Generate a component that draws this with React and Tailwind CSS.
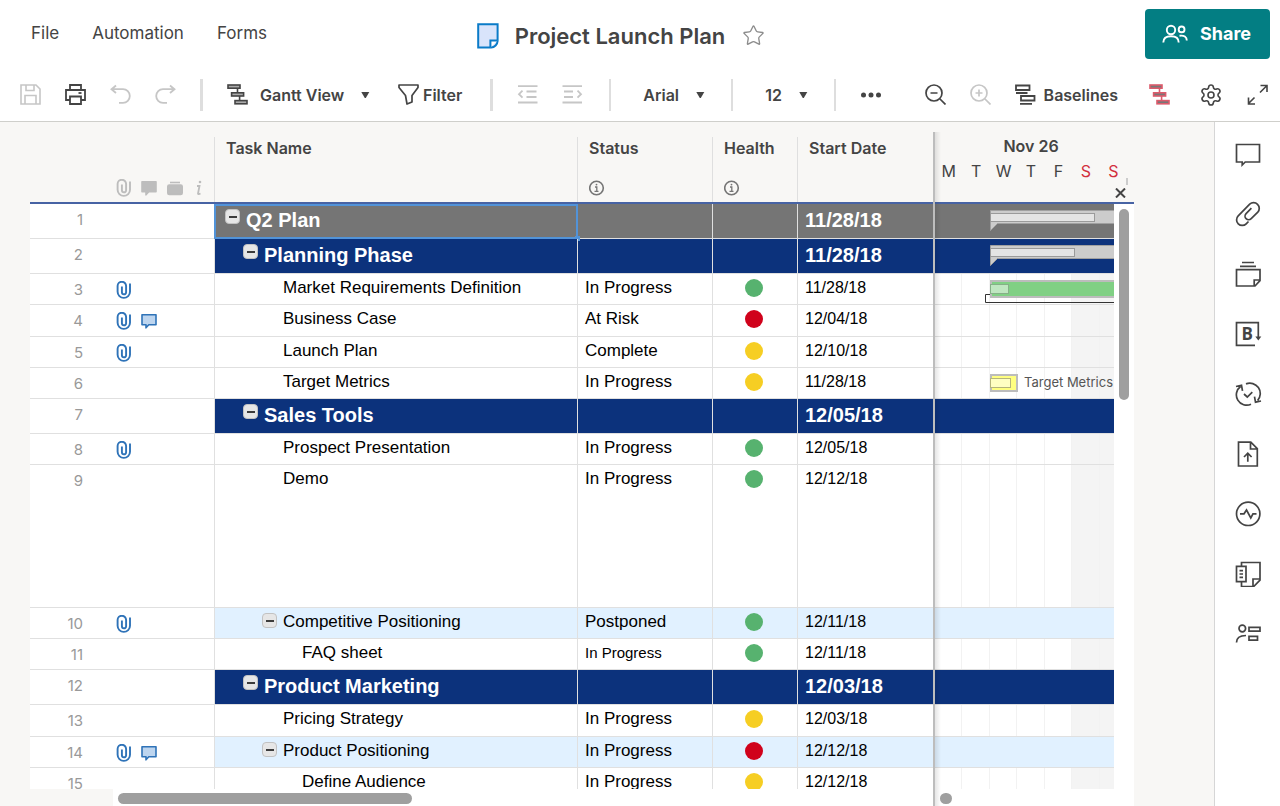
import { useState } from "react";
import { Settings, Star } from "lucide-react";

// Constants
const rows = [
  { id: 1, level: 0, type: "root", size: "lg", name: "Q2 Plan", date: "11/28/18", toggle: true, bar: "summary", progress: 105 },
  { id: 2, level: 1, type: "phase", size: "lg", name: "Planning Phase", date: "11/28/18", toggle: true, bar: "summary", progress: 85 },
  { id: 3, level: 2, size: "sm", name: "Market Requirements Definition", status: "In Progress", health: "green", date: "11/28/18", clip: true, bar: "green" },
  { id: 4, level: 2, size: "md", name: "Business Case", status: "At Risk", health: "red", date: "12/04/18", clip: true, comment: true },
  { id: 5, level: 2, size: "sm", name: "Launch Plan", status: "Complete", health: "yellow", date: "12/10/18", clip: true },
  { id: 6, level: 2, size: "sm", name: "Target Metrics", status: "In Progress", health: "yellow", date: "11/28/18", bar: "yellow" },
  { id: 7, level: 1, type: "phase", size: "lg", name: "Sales Tools", date: "12/05/18", toggle: true },
  { id: 8, level: 2, size: "sm", name: "Prospect Presentation", status: "In Progress", health: "green", date: "12/05/18", clip: true },
  { id: 9, level: 2, size: "xl", name: "Demo", status: "In Progress", health: "green", date: "12/12/18" },
  { id: 10, level: 2, type: "group", size: "sm", name: "Competitive Positioning", status: "Postponed", health: "green", date: "12/11/18", toggle: true, clip: true },
  { id: 11, level: 3, size: "sm", name: "FAQ sheet", status: "In Progress", smallStatus: true, health: "green", date: "12/11/18" },
  { id: 12, level: 1, type: "phase", size: "lg", name: "Product Marketing", date: "12/03/18", toggle: true },
  { id: 13, level: 2, size: "md", name: "Pricing Strategy", status: "In Progress", health: "yellow", date: "12/03/18" },
  { id: 14, level: 2, type: "group", size: "sm", name: "Product Positioning", status: "In Progress", health: "red", date: "12/12/18", toggle: true, clip: true, comment: true },
  { id: 15, level: 3, size: "sm", name: "Define Audience", status: "In Progress", health: "yellow", date: "12/12/18" },
];

const rowHeights = {
  sm: "h-[31px]",
  md: "h-[32px]",
  lg: "h-[35px]",
  xl: "h-[143px]",
};

const rowColors = {
  root: "bg-[#757575] text-white",
  phase: "bg-[#0c327c] text-white",
  group: "bg-[#e1f1ff] text-black",
  task: "bg-white text-black",
};

const indents = ["pl-[10px]", "pl-[28px]", "pl-[47px]", "pl-[66px]"];

const healthColors = {
  green: "bg-[#57b26f]",
  red: "bg-[#d0021b]",
  yellow: "bg-[#f6ce23]",
};

const days = ["M", "T", "W", "T", "F", "S", "S"];

const Icon = ({ w, h, sw = 1.6, className = "", children }) => (
  <svg
    width={w}
    height={h}
    viewBox={`0 0 ${w} ${h}`}
    fill="none"
    stroke="currentColor"
    strokeWidth={sw}
    className={`shrink-0 ${className}`}
    aria-hidden="true"
  >
    {children}
  </svg>
);

const ClipIcon = () => (
  <Icon w={15} h={18} sw={1.9}>
    <path d="M14 2.5v8.2a6.2 6.2 0 0 1-12.4 0V5a4.2 4.2 0 0 1 8.5 0v6.3a2.1 2.1 0 0 1-4.2 0V5.5" />
  </Icon>
);

const CommentIcon = ({ fill }) => (
  <Icon w={16} h={16} sw={1.6}>
    <path d="M1 1.8h14v10H7.8l-2.8 3v-3H1z" fill={fill} strokeLinejoin="round" />
  </Icon>
);

const InfoIcon = () => (
  <Icon w={16} h={16} className="text-[#757575]">
    <circle cx="7.500" cy="8" r="6.800" />
    <path d="M6 7h1.8v4.2M5.500 11.400h4" strokeWidth="1.3" />
    <circle cx="7.500" cy="4.600" r="0.900" fill="currentColor" stroke="none" />
  </Icon>
);

const Caret = () => (
  <svg width="9" height="6" viewBox="0 0 9 6" className="shrink-0 pointer-events-none" aria-hidden="true">
    <path d="M.3 0h8L4.8 6H3.8z" fill="#444" />
  </svg>
);

const ToolButton = ({ label, className = "", children }) => (
  <button aria-label={label} className={`flex items-center shrink-0 ${className}`}>
    {children}
  </button>
);

const ToolSelect = ({ label, options, className }) => (
  <label className="flex items-center shrink-0">
    <select
      aria-label={label}
      className={`appearance-none bg-transparent p-0 text-base font-semibold focus:outline-none ${className}`}
    >
      {options.map((option) => (
        <option key={option}>{option}</option>
      ))}
    </select>
    <Caret />
  </label>
);

const Separator = ({ className }) => (
  <div className={`h-8 shrink-0 bg-[#dedede] ${className}`}></div>
);

const GanttIcon = ({ className = "", fill }) => (
  <Icon w={21} h={21} className={className}>
    <rect x="1" y="1" width="12" height="3.2" fill={fill} />
    <rect x="4.6" y="8.8" width="12" height="3.2" fill={fill} />
    <rect x="8" y="16.6" width="12" height="3.2" fill={fill} />
    <path d="M10.5 4.2v4.6M12.6 12v4.6" />
  </Icon>
);

const TopBar = () => (
  <div className="flex items-center h-[68px]">
    <nav className="flex flex-1 gap-[33px] pl-[31px] text-[17px]">
      <a href="#file">File</a>
      <a href="#automation">Automation</a>
      <a href="#forms">Forms</a>
    </nav>
    <div className="flex items-center mr-[59px] pt-[3px]">
      <Icon w={22} h={26} sw={2}>
        <path d="M1.2 1.2h19.4V18a7 7 0 0 1-6.500 6.600H1.200z" fill="#d9e4fb" stroke="#0a7bc8" />
        <path d="M20.600 17.400h-7.200v7.200" fill="#fff" stroke="#0a7bc8" />
      </Icon>
      <h1 className="ml-4 text-[22px] leading-7 font-semibold">Project Launch Plan</h1>
      <button aria-label="Add to favorites" className="ml-[17px] text-[#8c8c8c]">
        <Star size={23} strokeWidth={1.4} />
      </button>
    </div>
    <div className="flex flex-1 justify-end pr-2.5">
      <button className="flex items-center gap-3 h-[50px] w-[125px] pl-[17px] rounded bg-[#037e83] text-white text-lg font-bold">
        <Icon w={26} h={20} sw={1.9}>
          <circle cx="9" cy="6" r="4.2" />
          <circle cx="19.6" cy="5.4" r="2.9" />
          <path d="M1.3 18.600c0-4 3-6.400 7.700-6.400s7.700 2.400 7.700 6.400M17.500 11.800c4.600-.6 7.300 1 7.300 4.600" />
        </Icon>
        Share
      </button>
    </div>
  </div>
);

const Toolbar = () => (
  <div className="flex items-center h-[53px] pl-5 pr-3">
    <div className="flex items-center gap-6">
      <ToolButton label="Save" className="text-[#c6c6c6]">
        <Icon w={21} h={21}>
          <path d="M1 1h15l4 4v15H1zM6 1v5.500h8V1M5 20v-8.500h11V20" />
        </Icon>
      </ToolButton>
      <ToolButton label="Print">
        <Icon w={21} h={21} sw={1.8}>
          <path d="M5 6V1h11v5M5 16H1V6h19v10h-4" />
          <path d="M5 12.500h11V20H5z" />
          <path d="M13.500 9h3" />
        </Icon>
      </ToolButton>
      <ToolButton label="Undo" className="text-[#c6c6c6]">
        <Icon w={21} h={21} sw={1.8}>
          <path d="M6 1.500L1.500 5.200 6 9M1.500 5.200H13a6.800 6.800 0 0 1 0 13.600H9" />
        </Icon>
      </ToolButton>
      <ToolButton label="Redo" className="text-[#c6c6c6]">
        <Icon w={21} h={21} sw={1.8}>
          <path d="M15 1.500l4.500 3.700L15 9M19.500 5.200H8a6.800 6.800 0 0 0 0 13.600h4" />
        </Icon>
      </ToolButton>
    </div>
    <Separator className="mx-6 w-[3px]" />
    <GanttIcon fill="#aaaaaa" className="mr-3" />
    <ToolSelect label="View" options={["Gantt View", "Grid View", "Card View"]} className="w-[101px]" />
    <ToolButton label="Filter" className="ml-7 gap-1 font-semibold">
      <Icon w={21} h={21} sw={1.7}>
        <path d="M1 1h19v2.500l-6 8V18l-5 2-1.500-8.500L1 3.500z" strokeLinejoin="round" />
      </Icon>
      Filter
    </ToolButton>
    <Separator className="ml-7 mr-6 w-[3px]" />
    <div className="flex items-center gap-6 text-[#c6c6c6]">
      <ToolButton label="Outdent">
        <Icon w={21} h={21} sw={1.8}>
          <path d="M1 2.200h19.500M9.500 7.500h10M9.500 13h10M1 18.500h19.500M5.500 6.700L2 10.200l3.500 3.500" />
        </Icon>
      </ToolButton>
      <ToolButton label="Indent">
        <Icon w={21} h={21} sw={1.8}>
          <path d="M.5 2.200h19.500M2 7.500h9M2 13h9M.5 18.500h19.500M15.500 6.700l3.500 3.500-3.500 3.500" />
        </Icon>
      </ToolButton>
    </div>
    <Separator className="ml-[26px] mr-8 w-0.5" />
    <ToolSelect label="Font" options={["Arial", "Tahoma", "Verdana"]} className="w-[53px]" />
    <Separator className="ml-[26px] mr-8 w-0.5" />
    <ToolSelect label="Font size" options={["12", "14", "16"]} className="w-[34px]" />
    <Separator className="ml-[26px] mr-6 w-0.5" />
    <ToolButton label="More">
      <svg width="22" height="6" viewBox="0 0 22 6" fill="currentColor">
        <circle cx="3.500" cy="3" r="2.500" />
        <circle cx="11" cy="3" r="2.500" />
        <circle cx="18.500" cy="3" r="2.500" />
      </svg>
    </ToolButton>
    <div className="flex items-center ml-auto">
      <div className="flex items-center gap-6">
        <ToolButton label="Zoom out">
          <Icon w={21} h={21} sw={1.7}>
            <circle cx="9" cy="9" r="8" />
            <path d="M15 15l5.500 5.500M5.500 9h7" />
          </Icon>
        </ToolButton>
        <ToolButton label="Zoom in" className="text-[#c6c6c6]">
          <Icon w={21} h={21} sw={1.7}>
            <circle cx="9" cy="9" r="8" />
            <path d="M15 15l5.500 5.500M5.500 9h7M9 5.500v7" />
          </Icon>
        </ToolButton>
        <ToolButton label="Baselines" className="gap-2 font-semibold">
          <Icon w={21} h={21} sw={1.8}>
            <path d="M1 1.500h13.500V6H1zM1 9h11.500M6 12h13.500v4.500H6zM5 19.800h12" />
          </Icon>
          Baselines
        </ToolButton>
      </div>
      <ToolButton label="Critical path" className="ml-[31px] text-[#dc5b6b]">
        <GanttIcon fill="#777777" />
      </ToolButton>
      <ToolButton label="Settings" className="ml-[29px]">
        <Settings size={24} strokeWidth={1.6} />
      </ToolButton>
      <ToolButton label="Full screen" className="ml-6">
        <Icon w={21} h={22} sw={1.6}>
          <path d="M13 8.500L19.500 2M7.500 13.500L1.500 19.500M13.500 1.500H20V8M1.500 13.500v6.500H8" />
        </Icon>
      </ToolButton>
    </div>
  </div>
);

const GridHeader = () => (
  <thead className="text-left text-base font-semibold">
    <tr className="h-[67px]">
      <th className="p-0 align-bottom border-b-2 border-[#4763a4]">
        <div className="flex items-center gap-2.5 h-7 pl-[86px] text-[#bdbdbd]">
          <ClipIcon />
          <CommentIcon fill="currentColor" />
          <Icon w={16} h={16}>
            <path d="M3 2.500h10" />
            <rect x=".8" y="5" width="14.400" height="9.500" rx="1.500" fill="currentColor" />
          </Icon>
          <Icon w={10} h={16} className="ml-px" sw={1.8}>
            <circle cx="6" cy="2" r="1.300" fill="currentColor" stroke="none" />
            <path d="M3 6h2.500L4 13.500c0 .8 1.200.6 2.500 0" />
          </Icon>
        </div>
      </th>
      {["Task Name", "Status", "Health", "Start Date"].map((label, i) => (
        <th key={label} className="p-0 align-top border-b-2 border-b-[#4763a4]">
          <div className="h-[65px] -ml-px pl-[11px] border-l border-[#dfdfdf] font-semibold">
            <div className="leading-[22px]">{label}</div>
            {(i === 1 || i === 2) && (
              <div className="mt-[21px]">
                <InfoIcon />
              </div>
            )}
          </div>
        </th>
      ))}
    </tr>
  </thead>
);

const GridRow = ({ row, selected, onSelect }) => {
  const big = row.size === "lg";
  const cell = `p-0 align-top border-b border-r border-[#e0e0e0] ${rowColors[row.type || "task"]}`;
  const text = big ? "text-xl leading-8 font-bold" : "pt-0.5 text-[17px] leading-6";
  const dateText = big ? "text-xl leading-8 font-bold" : "pt-0.5 text-base leading-6";

  return (
    <tr className={rowHeights[row.size]}>
      <td className="p-0 align-top bg-white border-b border-r border-[#e0e0e0]">
        <div className="flex items-center h-[30px] pt-px">
          <span className="w-[53px] text-right text-[15px] leading-6 text-[#999] font-[Inter,sans-serif]">
            {row.id}
          </span>
          <div className="flex items-center gap-2.5 ml-[33px] text-[#2f73b8]">
            {row.clip && <ClipIcon />}
            {row.comment && <CommentIcon fill="#bdd5ef" />}
          </div>
        </div>
      </td>
      <td className={`relative ${cell}`} onClick={onSelect}>
        <div className={`flex items-start ${indents[row.level]}`}>
          {row.toggle ? (
            <button
              aria-label={`Collapse ${row.name}`}
              className="flex items-center justify-center size-[15px] mt-[5px] rounded-sm border border-[#c2c2c2] bg-[#e6e6e6]"
            >
              <span className="w-2 h-0.5 bg-[#3c3c3c]"></span>
            </button>
          ) : (
            <span className="w-[15px]"></span>
          )}
          <span className={`ml-[6px] whitespace-nowrap ${text}`}>{row.name}</span>
        </div>
        {selected && (
          <div className="absolute -inset-px top-0 border-2 border-[#5293d8] pointer-events-none">
            <div className="absolute -right-1 -bottom-1 size-[5px] bg-[#5293d8]"></div>
          </div>
        )}
      </td>
      <td className={cell}>
        <div className={`pl-[7px] ${row.smallStatus ? "pt-0.5 text-[15px] leading-6" : text}`}>
          {row.status}
        </div>
      </td>
      <td className={cell}>
        {row.health && (
          <div
            title={row.health}
            className={`size-[18px] ml-8 mt-[5px] rounded-full ${healthColors[row.health]}`}
          ></div>
        )}
      </td>
      <td className={`${cell} border-r-0`}>
        <div className={`pl-[7px] ${dateText}`}>{row.date}</div>
      </td>
    </tr>
  );
};

const GanttBar = ({ row }) => {
  if (row.bar === "summary") {
    return (
      <svg width="124" height="22" className="absolute left-[55px] top-1.5" aria-hidden="true">
        <path d="M.5.5H125V13.500H7.500L.5 20.500z" fill="#cccccc" stroke="#a0a0a0" />
        <rect x=".5" y="3.500" width={row.progress - 1} height="8" fill="#e4e4e4" stroke="#9a9a9a" />
      </svg>
    );
  }
  if (row.bar === "green") {
    return (
      <svg width="129" height="24" className="absolute left-[50px] top-1.5" aria-hidden="true">
        <path d="M5 14.500H.5v8H130" fill="none" stroke="#333" />
        <rect x="6" y="1" width="130" height="16" fill="#80d084" stroke="#bcbcbc" strokeWidth="2" />
        <rect x="5.500" y="4.500" width="18" height="9" fill="#bfe7c1" stroke="#86b088" />
      </svg>
    );
  }
  return (
    <div className="absolute left-[55px] top-1.5 flex items-start">
      <svg width="28" height="18" aria-hidden="true">
        <rect x="1" y="1" width="26" height="16" fill="#ffff80" stroke="#bcbcbc" strokeWidth="2" />
        <rect x=".5" y="4.500" width="20" height="9" fill="#ffffc2" stroke="#b5b57c" />
      </svg>
      <span className="ml-1.5 text-[13px] leading-4 text-[#555] whitespace-nowrap">{row.name}</span>
    </div>
  );
};

const GanttRow = ({ row }) => (
  <div
    className={`relative shrink-0 overflow-hidden border-b border-[#e0e0e0] ${rowHeights[row.size]} ${rowColors[row.type || "task"]}`}
  >
    {!row.type && (
      <div className="grid grid-cols-7 w-48 h-full">
        {days.map((day, i) => (
          <div key={i} className={`border-r border-[#f2f2f2] ${i > 4 ? "bg-[#f4f4f4]" : ""}`}></div>
        ))}
      </div>
    )}
    {row.bar && <GanttBar row={row} />}
  </div>
);

const GanttPanel = () => (
  <div className="relative flex flex-col w-[201px] shrink-0 overflow-hidden border-l-2 border-[#bdbdbd]">
    <div className="relative h-[72px] shrink-0 pt-0.5 border-b-2 border-[#4763a4]">
      <div className="w-48 text-center text-base leading-6 font-semibold">Nov 26</div>
      <div className="grid grid-cols-7 w-48 text-center text-base leading-[26px]">
        {days.map((day, i) => (
          <span key={i} className={i > 4 ? "text-[#d22f3d]" : ""}>
            {day}
          </span>
        ))}
      </div>
      <button aria-label="Close timeline" className="absolute right-2 bottom-1">
        <Icon w={11} h={10} sw={2}>
          <path d="M1 .5l9 9M10 .5l-9 9" />
        </Icon>
      </button>
      <div className="absolute right-1.5 bottom-[17px] w-0.5 h-[7px] bg-[#cccccc]"></div>
    </div>
    <div className="flex flex-1 min-h-0">
      <div className="flex flex-col flex-1 min-w-0 overflow-hidden">
        {rows.map((row) => (
          <GanttRow key={row.id} row={row} />
        ))}
      </div>
      <div className="w-5 shrink-0 pt-[5px] bg-white">
        <div className="w-2.5 h-[191px] mx-auto rounded-full bg-[#9f9f9f]"></div>
      </div>
    </div>
    <div className="h-[17px] shrink-0 pt-1 pl-[5px] bg-white">
      <div className="w-3 h-[11px] rounded-full bg-[#9f9f9f]"></div>
    </div>
    {/* shadow cast by the splitter */}
    <div className="absolute inset-y-0 left-0 w-1.5 bg-gradient-to-r from-black/10 to-transparent pointer-events-none"></div>
  </div>
);

const sideItems = [
  {
    label: "Conversations",
    icon: <path d="M1.500 3.500h23V21H10.200l-3 3v-3H1.500z" />,
  },
  {
    label: "Attachments",
    icon: (
      <path d="M13.500 20.500l-2.300 2.300a5.600 5.600 0 0 1-8-7.900L14.700 3.200a5.700 5.700 0 0 1 8.100 8l-6.600 6.500a3.600 3.600 0 0 1-5.100-5.100l5.300-5.400" />
    ),
  },
  {
    label: "Proofs",
    icon: <path d="M7 1.500h12M5 5.300h16M1.500 8.700H25v11l-5 5.300H1.500zM25 19h-5.800v6" />,
  },
  {
    label: "Brandfolder",
    icon: (
      <>
        <path d="M20 24.300H1.500V1.700h21.800V16" />
        <path d="M20.300 15.500h6l-3 4z" fill="currentColor" stroke="none" />
        <text x="6.500" y="18.500" fontSize="17" fontWeight="700" fontFamily="Open Sans, sans-serif" fill="currentColor" stroke="none">
          B
        </text>
      </>
    ),
  },
  {
    label: "Update requests",
    icon: (
      <path d="M11 2.900A10.400 10.400 0 0 1 22.600 19.500M16 23.300A10.400 10.400 0 0 1 5.500 5.500M1 5.500l5.500-1.200 1 5.500M26 20l-5.500 1.200-1-5.500M9 13l3.300 3 5-4.800" />
    ),
  },
  {
    label: "Publish",
    icon: <path d="M3.500 1.200h12.300l6.500 6.500V25H3.500zM15.500 1.500v6.500h6.500M12.800 20.800v-8.500M9 16l3.800-3.800 3.800 3.800" />,
  },
  {
    label: "Activity log",
    icon: (
      <>
        <circle cx="13.200" cy="12.800" r="11.700" />
        <path d="M5 12.800h4l2.500-3.800 4.300 8 2.200-4.200h3.500" />
      </>
    ),
  },
  {
    label: "Sheet summary",
    icon: (
      <path d="M1.500 5.300H11v15.400H1.500zM6.500 5.300V1.500H25v17.700l-6.300 6.300H6.500v-4.800M25 18h-7v7M4.500 9.600h3.500M4.500 13h3.500M4.500 16.300h3.500" />
    ),
  },
  {
    label: "Work insights",
    icon: (
      <>
        <circle cx="7.300" cy="7.500" r="3.300" />
        <path d="M1.500 21.500c0-4.500 3.500-7 9.500-7M14 6.300h11v3.800H14zM14 15.300h8.500v3.800H14z" />
      </>
    ),
  },
];

const SideRail = () => (
  <aside className="flex flex-col items-center gap-[34px] w-[66px] shrink-0 pt-[19px] pl-0.5 border-l border-[#d6d6d6] bg-white">
    {sideItems.map((item) => (
      <button key={item.label} aria-label={item.label}>
        <Icon w={27} h={26} sw={1.7}>
          {item.icon}
        </Icon>
      </button>
    ))}
  </aside>
);

export default function App() {
  const [selectedRow, setSelectedRow] = useState(1);

  return (
    <div className="flex flex-col h-screen overflow-hidden bg-[#f8f7f5] text-[#444] font-[Inter,sans-serif]">
      <header className="shrink-0 bg-white border-b border-[#cfcfcb]">
        <TopBar />
        <Toolbar />
      </header>

      <div className="flex flex-1 min-h-0">
        {/* Sheet */}
        <main className="flex flex-1 min-w-0 pt-2.5 pr-20">
          <div className="flex flex-col flex-1 min-w-0">
            <div className="flex-1 min-h-0 pt-[5px] pl-[30px] overflow-hidden">
              <table className="w-full table-fixed border-separate border-spacing-0">
                <colgroup>
                  <col className="w-[185px]" />
                  <col />
                  <col className="w-[135px]" />
                  <col className="w-[85px]" />
                  <col className="w-[135px]" />
                </colgroup>
                <GridHeader />
                <tbody className="font-['Liberation_Sans',Arial,sans-serif]">
                  {rows.map((row) => (
                    <GridRow
                      key={row.id}
                      row={row}
                      selected={row.id === selectedRow}
                      onSelect={() => setSelectedRow(row.id)}
                    />
                  ))}
                </tbody>
              </table>
            </div>
            <div className="h-[17px] shrink-0 ml-[113px] pt-1 pl-[5px] bg-white">
              <div className="w-[294px] h-[11px] rounded-full bg-[#9f9f9f]"></div>
            </div>
          </div>
          <GanttPanel />
        </main>

        <SideRail />
      </div>
    </div>
  );
}
